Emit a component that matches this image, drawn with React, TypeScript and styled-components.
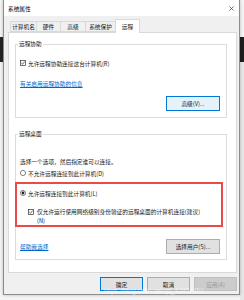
import React from 'react';
import styled, { createGlobalStyle } from 'styled-components';

const GlobalStyle = createGlobalStyle`
  html, body { margin: 0; padding: 0; }
  body {
    width: 244px;
    height: 300px;
    overflow: hidden;
    background: #f4f4f4;
    font-family: "Noto Sans CJK SC", "Microsoft YaHei", sans-serif;
    font-size: 5.7px;
    color: #1a1a1a;
  }
`;

const tabs = ['计算机名', '硬件', '高级', '系统保护', '远程'];
const tabWidths = [27, 25, 26, 31, 25];

export default function App() {
  return (
    <Desktop>
      <GlobalStyle />
      <BackWindow $left={0} $top={37} $w={4} $h={25} $bg="#262626" />
      <BackWindow $left={240} $top={37} $w={4} $h={25} $bg="#1f1f1f" />
      <BackWindow $left={240} $top={62} $w={4} $h={238} $bg="#e6e6e6" />

      <Dialog>
        <TitleBar>
          <span>系统属性</span>
          <svg width="5" height="5" viewBox="0 0 5 5">
            <path d="M0.5 0.5 L4.5 4.5 M4.5 0.5 L0.5 4.5" stroke="#333" strokeWidth="0.7" />
          </svg>
        </TitleBar>

        <Body>
          <TabRow>
            {tabs.map((t, i) => (
              <Tab key={t} $active={i === 4} style={{ width: tabWidths[i] }}>
                {t}
              </Tab>
            ))}
          </TabRow>

          <Panel>
            <Group>
              <Legend>远程协助</Legend>
              <OptionRow $top={11}>
                <CheckBox />
                允许远程协助连接这台计算机(R)
              </OptionRow>
              <Link $top={13}>有关启用远程协助的信息</Link>
              <ButtonRow $top={8}>
                <Button $variant="hover">高级(V)...</Button>
              </ButtonRow>
            </Group>

            <Group $gap={12} $bottom={5}>
              <Legend>远程桌面</Legend>
              <Text $top={20}>选择一个选项，然后指定谁可以连接。</Text>
              <OptionRow $top={3}>
                <Radio />
                不允许远程连接到此计算机(D)
              </OptionRow>
              <Highlight>
                <OptionRow>
                  <Radio $checked />
                  允许远程连接到此计算机(L)
                </OptionRow>
                <SubOption>
                  <CheckBox />
                  <span>
                    仅允许运行使用网络级别身份验证的远程桌面的计算机连接(建议)
                    <br />
                    (N)
                  </span>
                </SubOption>
              </Highlight>
              <ButtonRow $top={12} $between>
                <Link>帮助我选择</Link>
                <Button>选择用户(S)...</Button>
              </ButtonRow>
            </Group>
          </Panel>

          <Footer>
            <Button $variant="primary" $w={43} $h={14}>确定</Button>
            <Button $w={43} $h={14}>取消</Button>
            <Button $variant="disabled" $w={43} $h={14}>应用(A)</Button>
          </Footer>
        </Body>
      </Dialog>

      <Watermark>https://blog.csdn.net/qq_42951760</Watermark>
    </Desktop>
  );
}

function CheckBox() {
  return (
    <Box>
      <svg width="6" height="6" viewBox="0 0 6 6">
        <rect x="0.5" y="0.5" width="5" height="5" fill="#fff" stroke="#333" strokeWidth="0.7" />
        <path d="M1.3 3 L2.5 4.2 L4.7 1.6" fill="none" stroke="#222" strokeWidth="0.7" />
      </svg>
    </Box>
  );
}

function Radio({ $checked }: { $checked?: boolean }) {
  return (
    <Box>
      <svg width="6" height="6" viewBox="0 0 6 6">
        <circle cx="3" cy="3" r="2.6" fill="#fff" stroke="#333" strokeWidth="0.6" />
        {$checked && <circle cx="3" cy="3" r="1.4" fill="#222" />}
      </svg>
    </Box>
  );
}

const Desktop = styled.div`
  position: relative;
  width: 244px;
  height: 300px;
  overflow: hidden;
  background: #f4f4f4;
`;

const BackWindow = styled.div<{ $left: number; $top: number; $w: number; $h: number; $bg: string }>`
  position: absolute;
  left: ${(p) => p.$left}px;
  top: ${(p) => p.$top}px;
  width: ${(p) => p.$w}px;
  height: ${(p) => p.$h}px;
  background: ${(p) => p.$bg};
`;

const Dialog = styled.div`
  position: relative;
  z-index: 1;
  margin-left: 3px;
  width: 237px;
  height: 295px;
  box-sizing: border-box;
  border: 1px solid #8c8c8c;
  border-top: none;
  background: #f0f0f0;
  box-shadow: 0 0 3px rgba(0, 0, 0, 0.25);
  display: flex;
  flex-direction: column;
`;

const TitleBar = styled.div`
  height: 16px;
  flex: none;
  background: #fff;
  display: flex;
  align-items: center;
  justify-content: space-between;
  padding: 0 5px 0 4px;
  font-size: 5.7px;
  color: #000;
`;

const Body = styled.div`
  flex: 1;
  display: flex;
  flex-direction: column;
  padding: 3px 2px 3px 4px;
`;

const TabRow = styled.div`
  height: 13px;
  display: flex;
  align-items: flex-end;
  padding-left: 2px;
  position: relative;
  z-index: 1;
`;

const Tab = styled.div<{ $active?: boolean }>`
  box-sizing: border-box;
  height: ${(p) => (p.$active ? 14 : 11)}px;
  margin-bottom: ${(p) => (p.$active ? -1 : 0)}px;
  border: 1px solid #d9d9d9;
  border-bottom: ${(p) => (p.$active ? 'none' : '1px solid #d9d9d9')};
  background: ${(p) => (p.$active ? '#fff' : '#f0f0f0')};
  display: flex;
  align-items: center;
  justify-content: center;
  line-height: 1;
  white-space: nowrap;
  & + & { margin-left: -1px; }
`;

const Panel = styled.div`
  height: 241px;
  box-sizing: border-box;
  background: #fff;
  border: 1px solid #d9d9d9;
  padding: 7px 9px 0 6px;
`;

const Group = styled.fieldset<{ $gap?: number; $bottom?: number }>`
  margin: ${(p) => p.$gap || 0}px 0 0 0;
  padding: 0 6px ${(p) => p.$bottom ?? 6}px 4px;
  border: 1px solid #dcdcdc;
  min-width: 0;
`;

const Legend = styled.legend`
  padding: 0 1px;
  margin-left: -2px;
  line-height: 8px;
`;

const Text = styled.div<{ $top?: number }>`
  margin-top: ${(p) => p.$top || 0}px;
  line-height: 8px;
  white-space: nowrap;
`;

const OptionRow = styled.div<{ $top?: number }>`
  margin-top: ${(p) => p.$top || 0}px;
  height: 8px;
  display: flex;
  align-items: center;
  gap: 2px;
  white-space: nowrap;
`;

const Box = styled.span`
  width: 6px;
  height: 6px;
  display: inline-flex;
  flex: none;
`;

const Link = styled.div<{ $top?: number }>`
  margin-top: ${(p) => p.$top || 0}px;
  line-height: 8px;
  color: #0066cc;
  text-decoration: underline;
  white-space: nowrap;
`;

const ButtonRow = styled.div<{ $top?: number; $between?: boolean }>`
  margin-top: ${(p) => p.$top || 0}px;
  display: flex;
  align-items: center;
  justify-content: ${(p) => (p.$between ? 'space-between' : 'flex-end')};
`;

const Button = styled.div<{ $variant?: 'primary' | 'hover' | 'disabled'; $w?: number; $h?: number }>`
  box-sizing: border-box;
  width: ${(p) => p.$w || 54}px;
  height: ${(p) => p.$h || 15}px;
  display: flex;
  align-items: center;
  justify-content: center;
  white-space: nowrap;
  background: ${(p) =>
    p.$variant === 'hover' ? '#e5f1fb' : p.$variant === 'disabled' ? '#cccccc' : '#e1e1e1'};
  border: 1px solid
    ${(p) =>
      p.$variant === 'hover' || p.$variant === 'primary'
        ? '#0078d7'
        : p.$variant === 'disabled'
        ? '#bfbfbf'
        : '#adadad'};
  color: ${(p) => (p.$variant === 'disabled' ? '#9a9a9a' : '#1a1a1a')};
`;

const Highlight = styled.div`
  margin: 5px -3px 0 -5px;
  padding: 5px 0 0 3px;
  border: 2px solid #ea4a4a;
`;

const SubOption = styled.div`
  margin-top: 10px;
  padding-left: 8px;
  display: flex;
  align-items: flex-start;
  gap: 3px;
  line-height: 9px;
  & > span:first-child { margin-top: 1.5px; }
`;

const Footer = styled.div`
  margin-top: 4px;
  display: flex;
  justify-content: flex-end;
  gap: 4px;
`;

const Watermark = styled.div`
  position: absolute;
  z-index: 2;
  left: 104px;
  top: 287px;
  font-family: "Liberation Sans", sans-serif;
  font-size: 6.5px;
  color: rgba(255, 255, 255, 0.55);
  white-space: nowrap;
`;
